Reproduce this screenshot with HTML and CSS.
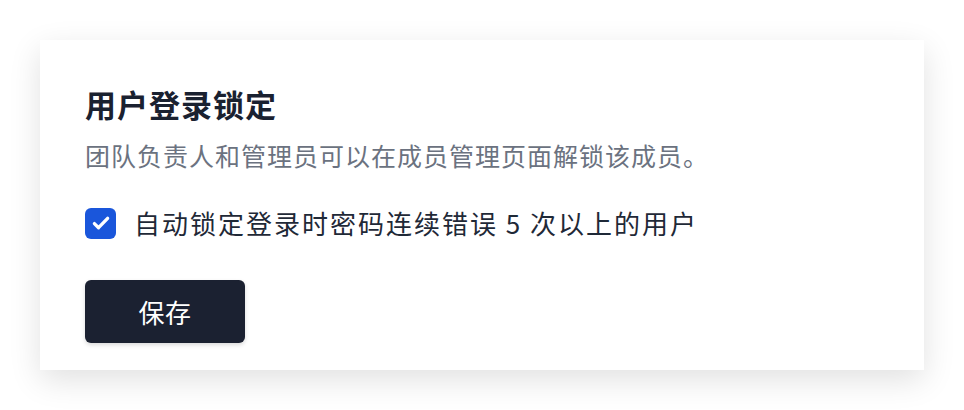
FILE: index.html
```html
<!DOCTYPE html>
<html lang="zh-CN">
<head>
    <meta charset="UTF-8">
    <meta name="viewport" content="width=device-width, initial-scale=1.0">
    <title>用户登录锁定</title>
    <link rel="stylesheet" href="styles.css">
</head>
<body>
    <div class="card">
        <h2 class="title">用户登录锁定</h2>
        <p class="desc">团队负责人和管理员可以在成员管理页面解锁该成员。</p>
        <label class="option">
            <span class="checkbox">
                <svg viewBox="0 0 20 20" width="22" height="22">
                    <path d="M4 10.5l3.8 3.8 8.2-8.6" fill="none" stroke="#fff" stroke-width="3" stroke-linecap="round" stroke-linejoin="round"/>
                </svg>
            </span>
            <span class="option-text">自动锁定登录时密码连续错误 5 次以上的用户</span>
        </label>
        <button type="button" class="save">保存</button>
    </div>
</body>
</html>
```

FILE: styles.css
```css
body {
    margin: 0;
    padding: 40px;
    background-color: #fff;
    font-family: "Noto Sans CJK SC", "Noto Sans", sans-serif;
}
.card {
    width: 884px;
    height: 330px;
    box-sizing: border-box;
    padding: 44px 45px 0;
    background: #fff;
    box-shadow: 0 10px 30px rgba(0,0,0,0.12);
}
.title {
    margin: 0;
    font-size: 31px;
    line-height: 40px;
    font-weight: 700;
    letter-spacing: 1px;
    color: #1a2130;
}
.desc {
    margin: 14px 0 0;
    font-size: 25px;
    line-height: 34px;
    letter-spacing: 1px;
    color: #6b7280;
}
.option {
    display: flex;
    align-items: center;
    gap: 18px;
    margin-top: 34px;
    height: 34px;
}
.checkbox {
    display: flex;
    align-items: center;
    justify-content: center;
    width: 31px;
    height: 31px;
    border-radius: 6px;
    background-color: #1a56db;
}
.option-text {
    font-size: 26px;
    line-height: 34px;
    letter-spacing: 2px;
    color: #1f2937;
}
.save {
    display: block;
    margin-top: 40px;
    width: 160px;
    height: 63px;
    border: none;
    border-radius: 6px;
    background-color: #1b2131;
    color: #fff;
    font-family: inherit;
    font-size: 26px;
    letter-spacing: 0.5px;
    cursor: pointer;
    box-shadow: 0 2px 4px rgba(0,0,0,0.15);
}
```
